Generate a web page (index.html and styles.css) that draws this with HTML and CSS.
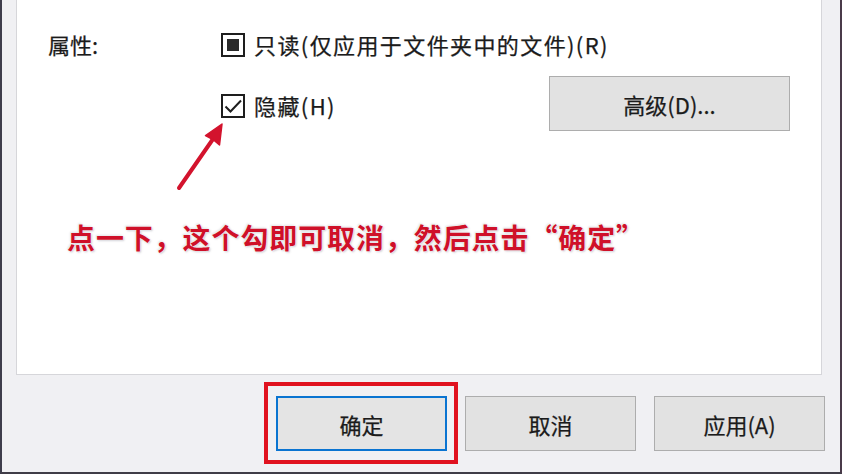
FILE: index.html
```html
<!DOCTYPE html>
<html lang="zh-CN">
<head>
<meta charset="utf-8">
<title>属性</title>
<link rel="stylesheet" href="styles.css">
</head>
<body>
<div class="frame">
  <div class="panel">
    <div class="row row-first">
      <div class="label">属性:</div>
      <div class="option">
        <span class="box">
          <svg class="box-svg" viewBox="0 0 24 24" width="24" height="24"><rect x="1" y="1" width="22" height="22" fill="#fff" stroke="#1e1e1e" stroke-width="2"/><rect x="6" y="6" width="12" height="12" fill="#2a2a2a"/></svg>
        </span>
        <span class="opt-text">只读(仅应用于文件夹中的文件)(R)</span>
      </div>
    </div>
    <div class="row row-second">
      <div class="option option-hidden">
        <span class="box">
          <svg class="box-svg" viewBox="0 0 24 24" width="24" height="24"><rect x="1" y="1" width="22" height="22" fill="#fff" stroke="#1e1e1e" stroke-width="2"/><path d="M4.5 12.5 L9.5 17.5 L20 6.5" fill="none" stroke="#1e1e1e" stroke-width="2"/></svg>
        </span>
        <span class="opt-text">隐藏(H)</span>
      </div>
      <button class="btn btn-adv">高级(D)...</button>
    </div>
    <div class="note">点一下，这个勾即可取消，然后点击“确定”</div>
  </div>
  <div class="footer">
    <div class="ok-wrap">
      <button class="btn btn-foot btn-ok">确定</button>
    </div>
    <button class="btn btn-foot btn-cancel">取消</button>
    <button class="btn btn-foot btn-apply">应用(A)</button>
  </div>
  <svg class="arrow" width="842" height="474" viewBox="0 0 842 474">
    <line x1="179" y1="188" x2="213" y2="139" stroke="#d3132d" stroke-width="4" stroke-linecap="round"/>
    <path d="M222 124 L219.5 145 L213 139.5 L205.5 135.5 Z" fill="#d3132d" stroke="#d3132d" stroke-width="1.5" stroke-linejoin="round"/>
  </svg>
</div>
</body>
</html>
```

FILE: styles.css
```css
* { box-sizing: border-box; }
html, body { margin: 0; padding: 0; background: #f0f0f2; }
body { font-family: "Noto Sans CJK SC", "Liberation Sans", sans-serif; color: #1b1b1b; }

.frame {
  position: relative;
  width: 842px;
  height: 474px;
  background: #f0f0f3;
  border-left: 2px solid #3e3d4b;
  border-right: 2px solid #4a3a4a;
  border-bottom: 2px solid #3f3c47;
  display: flex;
  flex-direction: column;
  overflow: hidden;
}

.panel {
  margin-left: 14px;
  width: 806px;
  height: 375px;
  flex: none;
  background: #fff;
  border: 1px solid #d6d6da;
  border-top: none;
  padding: 0 31px;
}

.row { display: flex; }
.row-first { margin-top: 32px; align-items: center; height: 25px; }
.label { width: 172px; font-size: 22px; line-height: 25px; -webkit-text-stroke: 0.25px #1b1b1b; }
.option { display: flex; align-items: center; }
.box { width: 25px; height: 25px; display: flex; align-items: center; justify-content: center; flex: none; }
.box-svg { display: block; }
.opt-text { margin-left: 9px; font-size: 22px; line-height: 25px; letter-spacing: 1.4px; -webkit-text-stroke: 0.25px #1b1b1b; }

.row-second { margin-top: 19px; padding-left: 172px; align-items: flex-start; }
.option-hidden { margin-top: 17px; }

.btn {
  font-family: "Noto Sans CJK SC", "Liberation Sans", sans-serif;
  font-size: 22px;
  color: #1b1b1b;
  background: #e2e2e2;
  border: 1px solid #adadad;
  padding: 0;
  display: flex;
  align-items: center;
  justify-content: center;
  -webkit-text-stroke: 0.25px #1b1b1b;
}
.btn-adv { margin-left: auto; width: 241px; height: 55px; }

.note {
  margin-top: 88px;
  margin-left: 19px;
  font-size: 28px;
  line-height: 36px;
  font-weight: 700;
  letter-spacing: 0.9px;
  color: #cf1029;
  text-shadow: 0 0 1px #fff, 0 0 2px #fff, 1px 1px 2px rgba(90, 90, 110, 0.35), -1px -1px 2px rgba(90, 90, 110, 0.2);
}

.footer {
  flex: 1;
  display: flex;
  justify-content: flex-end;
  align-items: flex-start;
  padding-top: 21px;
  padding-right: 15px;
  gap: 18px;
}
.btn-foot { width: 171px; height: 55px; }
.ok-wrap { position: relative; }
.btn-ok { border: 2px solid #0a74d1; background: #e4e4e4; }
.ok-wrap::after {
  content: "";
  position: absolute;
  left: -12px;
  right: -11px;
  top: -14px;
  bottom: -13px;
  border: 4px solid #e0121f;
  pointer-events: none;
}

.arrow { position: absolute; left: -2px; top: 0; pointer-events: none; }
```
